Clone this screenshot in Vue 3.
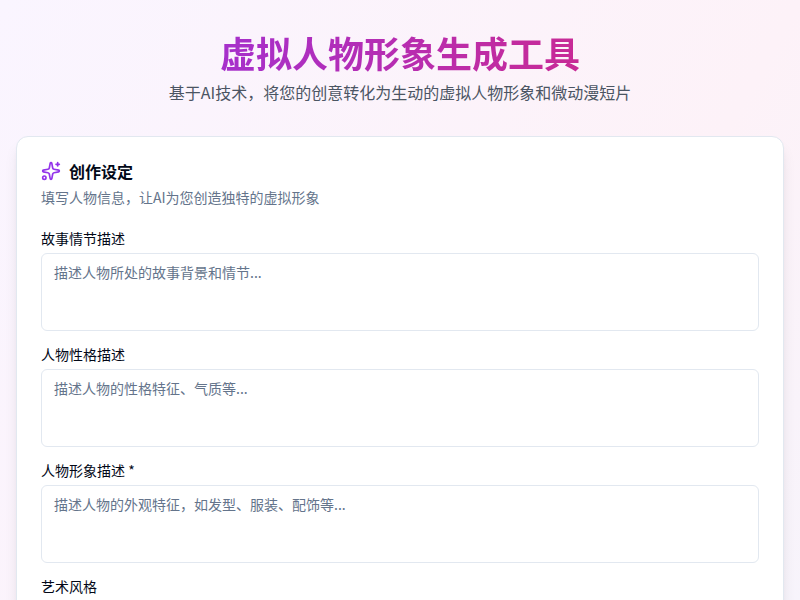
<template>
  <div class="page">
    <div class="container">
      <header class="header">
        <h1 class="title">虚拟人物形象生成工具</h1>
        <p class="subtitle">基于AI技术，将您的创意转化为生动的虚拟人物形象和微动漫短片</p>
      </header>

      <section class="card">
        <div class="card-header">
          <h2 class="card-title">
            <svg class="icon" viewBox="0 0 24 24" fill="none" stroke="currentColor" stroke-width="2" stroke-linecap="round" stroke-linejoin="round">
              <path d="M11.017 2.814a1 1 0 0 1 1.966 0l1.051 5.558a2 2 0 0 0 1.594 1.594l5.558 1.051a1 1 0 0 1 0 1.966l-5.558 1.051a2 2 0 0 0-1.594 1.594l-1.051 5.558a1 1 0 0 1-1.966 0l-1.051-5.558a2 2 0 0 0-1.594-1.594l-5.558-1.051a1 1 0 0 1 0-1.966l5.558-1.051a2 2 0 0 0 1.594-1.594z" />
              <path d="M20 2v4" />
              <path d="M22 4h-4" />
              <circle cx="4" cy="20" r="2" />
            </svg>
            创作设定
          </h2>
          <p class="card-desc">填写人物信息，让AI为您创造独特的虚拟形象</p>
        </div>

        <div class="card-content">
          <div v-for="f in fields" :key="f.key" class="field">
            <label class="label" :for="f.key">{{ f.label }}</label>
            <textarea :id="f.key" v-model="form[f.key]" class="textarea" :placeholder="f.placeholder"></textarea>
          </div>
          <div class="field">
            <label class="label">艺术风格</label>
          </div>
        </div>
      </section>
    </div>
  </div>
</template>

<script setup>
import { reactive } from 'vue'

const fields = [
  { key: 'story', label: '故事情节描述', placeholder: '描述人物所处的故事背景和情节...' },
  { key: 'personality', label: '人物性格描述', placeholder: '描述人物的性格特征、气质等...' },
  { key: 'appearance', label: '人物形象描述 *', placeholder: '描述人物的外观特征，如发型、服装、配饰等...' },
]

const form = reactive({ story: '', personality: '', appearance: '' })
</script>

<style>
body {
  margin: 0;
}
</style>

<style scoped>
.page {
  box-sizing: border-box;
  height: 100vh;
  overflow: hidden;
  background: linear-gradient(to bottom right, #faf5ff, #fdf2f8, #eff6ff) 0 0 / 100% 1400px no-repeat;
  color: #020817;
  font-family: "Noto Sans CJK SC", sans-serif;
}

.container {
  padding: 32px 16px;
}

.header {
  margin-bottom: 32px;
  text-align: center;
}

.title {
  margin: 0 0 8px;
  font-size: 36px;
  line-height: 40px;
  font-weight: 700;
  background: linear-gradient(to right, #9333ea, #db2777);
  -webkit-background-clip: text;
  background-clip: text;
  color: transparent;
}

.subtitle {
  margin: 0;
  font-size: 16px;
  line-height: 24px;
  color: #4b5563;
}

.card {
  border: 1px solid #e2e8f0;
  border-radius: 12px;
  background: #fff;
  box-shadow: 0 10px 15px -3px rgba(0, 0, 0, 0.1), 0 4px 6px -4px rgba(0, 0, 0, 0.1);
}

.card-header {
  display: flex;
  flex-direction: column;
  gap: 6px;
  padding: 24px;
}

.card-title {
  display: flex;
  align-items: center;
  gap: 8px;
  margin: 0;
  font-size: 16px;
  line-height: 20px;
  font-weight: 600;
}

.icon {
  width: 20px;
  height: 20px;
  color: #9333ea;
}

.card-desc {
  margin: 0;
  font-size: 14px;
  line-height: 20px;
  color: #64748b;
}

.card-content {
  display: flex;
  flex-direction: column;
  gap: 16px;
  padding: 0 24px 48px;
}

.field {
  display: flex;
  flex-direction: column;
  gap: 8px;
}

.label {
  font-size: 14px;
  line-height: 14px;
  font-weight: 400;
}

.textarea {
  box-sizing: border-box;
  width: 100%;
  height: 78px;
  padding: 8px 12px;
  border: 1px solid #e2e8f0;
  border-radius: 6px;
  background: #fff;
  color: inherit;
  font-family: inherit;
  font-size: 14px;
  line-height: 20px;
  resize: none;
}

.textarea::placeholder {
  color: #64748b;
}
</style>
